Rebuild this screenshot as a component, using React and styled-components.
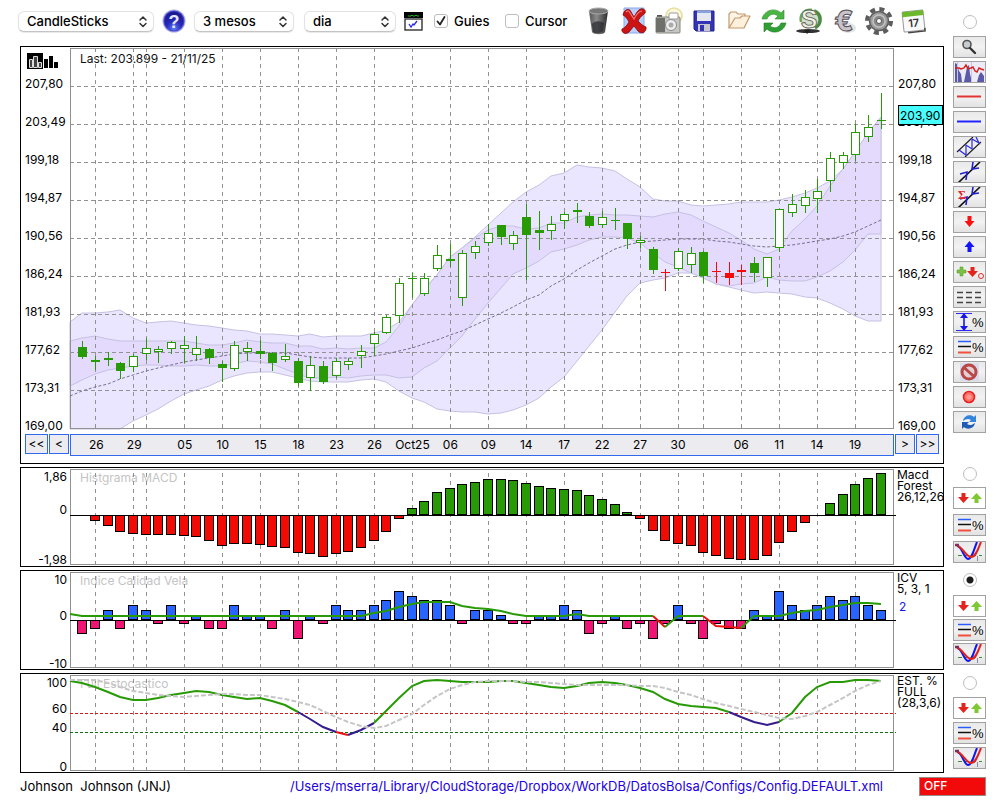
import React from "react";
import styled, { createGlobalStyle } from "styled-components";

const GlobalStyle = createGlobalStyle`
  * { box-sizing: border-box; }
  body {
    margin: 0;
    background: #fff;
    color: #000;
    font-family: Inter, "Liberation Sans", sans-serif;
    font-size: 12px;
    line-height: 14px;
  }
`;

/* ---------- layout ---------- */

const Page = styled.main`
  display: grid;
  grid-template-columns: minmax(0, 1fr) 33px;
  column-gap: 9px;
  row-gap: 3px;
  padding: 0 14px 0 20px;
`;

const Toolbar = styled.header`
  display: flex;
  align-items: center;
  gap: 10px;
  height: 46px;
  padding-bottom: 4px;
  margin-left: -2px;
`;

const Group = styled.div`
  display: flex;
  align-items: center;
  gap: 8px;
`;

const Checks = styled.div`
  display: flex;
  align-items: center;
`;

const SelectBox = styled.span`
  position: relative;
  display: block;
  width: ${(p) => p.$width}px;
  height: 21px;
  svg { position: absolute; right: 6px; top: 4px; pointer-events: none; }
`;

const Select = styled.select`
  appearance: none;
  width: 100%;
  height: 21px;
  padding: 0 8px;
  border: 1px solid #e2e2e2;
  border-bottom-color: #c4c4c4;
  border-radius: 6px;
  background: #fff;
  box-shadow: 0 1px 1px #00000018;
  color: #000;
  font: 500 13px/18px Inter, "Liberation Sans", sans-serif;
`;

const CheckLabel = styled.label`
  display: flex;
  align-items: center;
  gap: 6px;
  width: ${(p) => p.$width}px;
  font-size: 13px;
  font-weight: 500;
`;

const CheckInput = styled.input`
  appearance: none;
  flex: none;
  width: 14px;
  height: 14px;
  margin: 0;
  border: 1px solid #bdbdbd;
  border-radius: 3px;
  background: #fff;
  &:checked {
    background: url("data:image/svg+xml,%3Csvg xmlns='http://www.w3.org/2000/svg' viewBox='0 0 12 12'%3E%3Cpath d='M2.5 6.5 5 9.5 9.5 2' fill='none' stroke='%23222' stroke-width='1.8' stroke-linecap='round' stroke-linejoin='round'/%3E%3C/svg%3E") center / 12px 12px no-repeat;
  }
`;

const PlainButton = styled.button`
  display: grid;
  place-items: center;
  flex: none;
  width: ${(p) => p.$width}px;
  height: 28px;
  padding: 0;
  border: 0;
  background: none;
  svg { overflow: visible; }
`;

const Tools = styled.div`
  display: flex;
  align-items: center;
`;

const Panel = styled.section`
  display: grid;
  grid-template-columns: 49px minmax(0, 1fr) 49px;
  grid-template-rows: ${(p) => p.$plot}px;
  align-content: start;
  border: 1px solid #000;
  padding: 1px 0;
  height: ${(p) => p.$height}px;
  overflow: hidden;
`;

const Plot = styled.div`
  position: relative;
`;

const PlotTitle = styled.h2`
  position: absolute;
  left: 10px;
  top: ${(p) => p.$top}px;
  margin: 0;
  font-size: 12px;
  font-weight: 400;
  line-height: 14px;
  color: ${(p) => p.$color};
  white-space: nowrap;
`;

const Drawing = styled.svg`
  position: relative;
  display: block;
  width: 100%;
  height: ${(p) => p.$height}px;
  overflow: visible;
`;

const PriceAxis = styled.div`
  display: flex;
  flex-direction: column;
  gap: 24px;
  padding: ${(p) => p.$top}px 0 0 4px;
  white-space: nowrap;
`;

const AxisHead = styled.div`
  display: flex;
  flex-direction: column;
  padding-left: 6px;
  padding-top: 5px;
`;

const RightAxis = styled.div`
  position: relative;
`;

const LastPrice = styled.output`
  position: absolute;
  top: 57px;
  left: 4px;
  right: 0;
  height: 20px;
  border: 1px solid #000;
  background: #48ffff;
  padding-left: 1px;
  line-height: 20px;
  white-space: nowrap;
`;

const Nav = styled.div`
  grid-column: 1 / -1;
  display: grid;
  grid-template-columns: 49px minmax(0, 1fr) 49px;
  height: 20px;
  margin-top: 5px;
`;

const NavSide = styled.div`
  display: flex;
  gap: 1px;
  padding: 0 1px;
  justify-content: ${(p) => p.$justify};
`;

const NavButton = styled.button`
  width: ${(p) => p.$width}px;
  height: 20px;
  padding: 0;
  border: 1px solid #3068ee;
  background: #ebebf0;
  color: #000;
  font: 12px/18px Inter, "Liberation Sans", sans-serif;
`;

const Dates = styled.div`
  display: grid;
  grid-template-columns: repeat(65, minmax(0, 1fr));
  border: 1px solid #3068ee;
  background: #ebebf0;
  line-height: 20px;
`;

const DateLabel = styled.span`
  grid-row: 1;
  grid-column: ${(p) => p.$at} / span 2;
  justify-self: center;
`;

const ValueAxis = styled.div`
  display: grid;
  grid-template-rows: ${(p) => p.$rows};
  padding: 2px 3px 0 0;
  justify-items: end;
  line-height: 12px;
`;

const Notes = styled.div`
  display: flex;
  flex-direction: column;
  padding-left: 3px;
  line-height: 11px;
  white-space: nowrap;
`;

const NoteValue = styled.span`
  color: #1414ee;
  padding: 7px 2px;
`;

const Rail = styled.aside`
  display: flex;
  flex-direction: column;
  align-items: center;
  gap: ${(p) => p.$gap}px;
  padding-top: ${(p) => p.$top}px;
`;

const Radio = styled.input`
  appearance: none;
  flex: none;
  width: 14px;
  height: 14px;
  margin: 0 0 ${(p) => p.$below}px;
  border: 1px solid #bdbdbd;
  border-radius: 50%;
  background: #fff;
  &:checked { background: radial-gradient(circle, #1c1c1c 3px, #fff 4px); }
`;

const RailButton = styled.button`
  flex: none;
  width: 33px;
  height: 22px;
  padding: 0;
  border: 1px solid #a2a2a2;
  background: ${(p) => (p.$white ? "#fff" : "linear-gradient(#e9e9e9, #f2f2f2 50%, #e2e2e2)")};
  svg { display: block; }
`;

const Footer = styled.footer`
  display: flex;
  align-items: center;
  grid-column: 1 / -1;
  height: 20px;
  font-size: 13px;
  white-space: pre;
`;

const ConfigLink = styled.a`
  margin-left: auto;
  color: #2200e6;
  text-decoration: none;
`;

const OffButton = styled.button`
  width: 67px;
  height: 19px;
  margin-left: 36px;
  padding: 0 4px;
  border: 1px solid #9a8a8a;
  background: #f20a0a;
  color: #fff;
  text-align: left;
  font: 500 12px/16px Inter, "Liberation Sans", sans-serif;
`;

/* ---------- data ---------- */

const W = 824;
const px = (i) => Math.floor(12.672 * (i + 1) + 0.155);

const DATES = [
  [1, "26"], [4, "29"], [5, ""], [8, "05"], [11, "10"], [14, "15"], [17, "18"], [20, "23"],
  [23, "26"], [26, "Oct25"], [29, "06"], [32, "09"], [35, "14"], [38, "17"], [41, "22"],
  [44, "27"], [47, "30"], [49, ""], [52, "06"], [55, "11"], [58, "14"], [61, "19"],
];

const DATE_TEXT = DATES.filter(([, t]) => t);

const PRICES = ["207,80", "203,49", "199,18", "194,87", "190,56", "186,24", "181,93", "177,62", "173,31", "169,00"];

/* kind (F filled, H hollow, R red), high, body top, body bottom, low */
const CANDLES = [
  ["F", 293, 299, 309, 311], ["F", 308, 312, 314, 322], ["F", 304, 310, 312, 318], ["F", 314, 315, 323, 331],
  ["H", 306, 308, 319, 324], ["H", 290, 300, 306, 312], ["H", 298, 301, 304, 315], ["H", 293, 294, 301, 306],
  ["H", 288, 297, 301, 315], ["H", 288, 300, 307, 313], ["F", 300, 301, 310, 316], ["F", 313, 316, 320, 334],
  ["H", 293, 297, 321, 323], ["H", 294, 300, 304, 313], ["F", 292, 303, 306, 311], ["F", 304, 305, 315, 323],
  ["H", 296, 308, 312, 314], ["F", 310, 313, 335, 338], ["H", 308, 317, 330, 343], ["F", 313, 318, 334, 336],
  ["H", 310, 313, 328, 330], ["H", 310, 313, 317, 322], ["H", 297, 303, 308, 320], ["H", 284, 286, 296, 308],
  ["H", 267, 269, 285, 286], ["H", 230, 235, 268, 275], ["F", 225, 230, 231, 250], ["H", 225, 230, 246, 248],
  ["H", 197, 207, 221, 223], ["F", 196, 211, 213, 219], ["H", 202, 205, 250, 258], ["H", 193, 198, 205, 211],
  ["H", 176, 185, 195, 198], ["F", 177, 177, 189, 197], ["H", 183, 187, 196, 202], ["F", 156, 169, 187, 232],
  ["F", 163, 182, 185, 202], ["H", 168, 176, 183, 192], ["H", 164, 166, 173, 181], ["F", 155, 162, 164, 175],
  ["F", 164, 168, 178, 180], ["H", 163, 169, 177, 180], ["F", 160, 172, 173, 182], ["F", 175, 175, 191, 201],
  ["H", 188, 192, 195, 200], ["F", 199, 201, 222, 226], ["R", 221, 224, 225, 243], ["H", 200, 203, 221, 223],
  ["H", 199, 205, 217, 225], ["F", 203, 204, 228, 235], ["R", 214, 223, 224, 235], ["R", 214, 225, 230, 237],
  ["R", 217, 222, 224, 237], ["F", 209, 215, 225, 234], ["H", 209, 209, 230, 239], ["H", 161, 161, 200, 204],
  ["H", 146, 156, 165, 169], ["H", 142, 149, 158, 165], ["H", 131, 143, 151, 165], ["H", 104, 110, 133, 144],
  ["H", 104, 107, 115, 121], ["H", 76, 84, 107, 113], ["H", 67, 79, 89, 94], ["F", 45, 72, 73, 81],
];

/* band and line series start one step before the first candle */
const OUTER_TOP = [274, 265, 265, 264, 262, 270, 275, 274, 273, 275, 277, 278, 280, 282, 283, 286, 286, 287, 288, 286, 289, 288, 288, 288, 285, 282, 274, 257, 241, 227, 209, 200, 189, 177, 165, 154, 144, 137, 128, 125, 117, 119, 120, 123, 131, 139, 151, 153, 153, 157, 158, 157, 156, 154, 154, 154, 152, 149, 145, 140, 133, 121, 104, 85, 69];
const INNER_TOP = [293, 290, 288, 291, 293, 293, 293, 293, 293, 293, 295, 297, 297, 295, 292, 294, 295, 295, 298, 298, 301, 300, 301, 300, 300, 294, 278, 257, 242, 227, 209, 200, 190, 182, 178, 178, 181, 180, 175, 175, 169, 167, 166, 167, 167, 168, 169, 166, 164, 167, 173, 179, 185, 192, 201, 206, 201, 183, 171, 158, 138, 121, 104, 85, 69];
const INNER_LOW = [338, 332, 326, 322, 320, 318, 317, 317, 318, 318, 317, 318, 318, 316, 313, 314, 316, 321, 326, 330, 330, 329, 330, 328, 327, 327, 330, 329, 320, 313, 300, 288, 271, 255, 240, 226, 220, 213, 204, 201, 197, 192, 189, 189, 190, 195, 205, 214, 219, 225, 230, 236, 238, 236, 235, 229, 232, 233, 233, 229, 223, 214, 202, 186, 186];
const OUTER_LOW = [381, 381, 381, 381, 381, 373, 367, 361, 353, 346, 342, 338, 332, 328, 325, 324, 324, 327, 330, 333, 334, 334, 334, 332, 331, 334, 343, 350, 354, 361, 363, 364, 364, 366, 365, 362, 357, 350, 339, 329, 313, 298, 282, 264, 248, 235, 232, 230, 225, 225, 229, 236, 239, 242, 245, 244, 245, 246, 249, 250, 255, 261, 268, 273, 273];
const MIDDLE = [348, 343, 339, 336, 331, 327, 323, 320, 317, 314, 312, 310, 308, 306, 305, 305, 305, 305, 307, 309, 310, 310, 310, 310, 308, 306, 303, 300, 296, 292, 287, 283, 277, 271, 265, 259, 252, 247, 238, 231, 222, 215, 208, 201, 197, 194, 193, 192, 191, 191, 191, 193, 194, 196, 198, 199, 198, 197, 195, 193, 191, 188, 184, 178, 172];

const MACD = [0, -6, -11, -17, -19, -20, -20, -20, -21, -22, -26, -31, -29, -29, -30, -32, -33, -38, -39, -42, -39, -37, -33, -26, -17, -4, 7, 14, 23, 27, 31, 33, 36, 36, 35, 32, 29, 27, 26, 25, 20, 16, 11, 3, -4, -16, -26, -29, -31, -38, -41, -44, -45, -45, -41, -28, -17, -8, 0, 12, 21, 31, 37, 42];
const ICV = [-3, -2, 2, -2, 3, 2, -1, 3, -1, 1, -2, -2, 3, 1, 1, -2, 2, -4, 1, -1, 3, 2, 2, 3, 4, 6, 5, 4, 4, 3, -1, 2, 2, 1, -1, -1, 1, 1, 3, 2, -3, -1, 1, -2, -1, -4, -1, 3, -1, -4, -1, -2, -2, 2, 1, 6, 3, 2, 3, 5, 4, 5, 3, 2];
const ICV_LINE = [42, 44, 44, 44, 44, 44, 44, 44, 44, 44, 44, 44, 44, 44, 44, 44, 44, 44, 44, 44, 44, 44, 44, 44, 41, 39, 35, 32, 30, 30, 30, 34, 36, 37, 39, 42, 44, 44, 44, 44, 42, 44, 44, 44, 44, 44, 44, 55, 44, 44, 44, 54, 55, 56, 44, 44, 44, 41, 39, 38, 35, 33, 31, 31, 32];
const STOCH = [6, 8, 12, 17, 22, 25, 25, 23, 20, 18, 16, 17, 20, 22, 24, 23, 26, 30, 37, 44, 52, 57, 60, 55, 48, 36, 23, 11, 6, 5, 6, 7, 7, 7, 6, 6, 8, 10, 12, 13, 11, 8, 7, 8, 10, 13, 17, 24, 29, 31, 32, 33, 37, 42, 47, 50, 47, 38, 22, 12, 7, 7, 5, 5, 6];
const STOCH_SLOW = [5, 5, 5, 8, 12, 16, 18, 20, 21, 22, 21, 20, 19, 19, 20, 20, 22, 24, 27, 30, 36, 42, 47, 51, 53, 51, 45, 39, 30, 21, 14, 10, 7, 6, 6, 6, 7, 7, 8, 9, 10, 10, 10, 10, 10, 11, 11, 13, 17, 20, 24, 28, 31, 34, 37, 40, 43, 44, 41, 37, 30, 23, 16, 10, 6];

const GREEN = "#289a05";
const points = (list) => list.map((y, k) => `${px(k - 1)},${y}`).join(" ");
const slice = (list, from, to) =>
  list.slice(from + 1, to + 2).map((y, k) => `${px(from + k)},${y}`).join(" ");
const band = (top, low) =>
  points(top) + " " + low.map((y, k) => `${px(k - 1)},${y}`).reverse().join(" ");

/* ---------- chart parts ---------- */

function Grid({ height, rows = [], from = 0 }) {
  return (
    <g fill="none" stroke="#919191" shapeRendering="crispEdges">
      <rect x="0.5" y="0.5" width={W - 1} height={height - 1} />
      {rows.map((y) => (
        <line key={y} x1="0" x2={W + 2} y1={y + 0.5} y2={y + 0.5} strokeDasharray="4 3" />
      ))}
      {DATES.map(([i]) => (
        <line key={i} x1={px(i) + 0.5} x2={px(i) + 0.5} y1={from} y2={height + 1} strokeDasharray="4 4" />
      ))}
    </g>
  );
}

function Chart({ height, children }) {
  return (
    <Drawing $height={height} viewBox={`0 0 ${W} ${height}`} preserveAspectRatio="none" aria-hidden="true">
      {children}
    </Drawing>
  );
}

function Candle({ index, data: [kind, high, top, bottom, low] }) {
  const x = px(index);
  const color = kind === "R" ? "#f50a0a" : GREEN;
  return (
    <g shapeRendering="crispEdges">
      <rect x={x} y={high} width="1" height={low - high} fill={color} />
      <rect x={x - 4} y={top} width="9" height={bottom - top} fill={color} />
      {kind === "H" && <rect x={x - 3} y={top + 1} width="7" height={bottom - top - 2} fill="#fff" />}
    </g>
  );
}

function Bars({ sizes, zero, up, down }) {
  return (
    <g shapeRendering="crispEdges" stroke="#000">
      {sizes.map((v, i) => {
        if (!v) return null;
        const h = Math.abs(v);
        return (
          <rect
            key={i}
            x={px(i) - 4.5}
            y={v > 0 ? zero - h + 0.5 : zero + 0.5}
            width="9"
            height={h - 1}
            fill={v > 0 ? up : down}
          />
        );
      })}
      <line x1="0" x2={W + 2} y1={zero + 0.5} y2={zero + 0.5} />
    </g>
  );
}

function Line({ list, from, to, color }) {
  return <polyline points={slice(list, from, to)} fill="none" stroke={color} strokeWidth="2" />;
}

/* ---------- rail icons ---------- */

const RailIcon = ({ children }) => (
  <svg width="31" height="20" viewBox="1 1 31 20" aria-hidden="true">{children}</svg>
);

const Percent = ({ x, y }) => (
  <text x={x} y={y} fontSize="13" fontWeight="500" fontFamily="Liberation Sans, sans-serif">%</text>
);

const TrendArrows = () => (
  <g fill="none">
    <path d="M5 22 27 1" stroke="#111" strokeWidth="1.6" />
    <path d="m7 13 7-2-1 8M20 1l-1 7 7-1" stroke="#2020d0" strokeWidth="1.6" />
  </g>
);

const Level = () => (
  <>
    <path d="M5 5.500h13" stroke="#2a5cff" strokeWidth="1.500" />
    <path d="M5 10.500h13" stroke="#111" strokeWidth="1.500" />
    <path d="M5 16.500h13" stroke="#f0503c" strokeWidth="2" />
    <Percent x={19} y={16} />
  </>
);

const Curves = () => (
  <g fill="none">
    <path d="M5 14.500h24" stroke="#3d8b3d" strokeDasharray="4 3" />
    <path d="M24.500 15v5" stroke="#8888a8" />
    <path d="M4 5C9 5 11 18 15 18S21 8 24 1" stroke="#1414ee" strokeWidth="2" />
    <path d="M3 4C9 5 13 16 18 16S25 8 28 1" stroke="#e0241c" strokeWidth="2" />
    <path d="M2 4h4" stroke="#803060" strokeWidth="2.500" />
  </g>
);

const UpDown = () => (
  <>
    <path d="M8.500 6h4v4h3.500l-5.500 6L5 10h3.500z" fill="#e3241c" />
    <path d="M21.500 16h4v-4H29l-5.500-6L18 12h3.500z" fill="#7ec832" />
  </>
);

const RAIL = [
  ["Zoom", <><circle cx="14" cy="8.500" r="4" fill="#c8ccd0" stroke="#555" strokeWidth="1.600" /><path d="m17 12 5 5" stroke="#333" strokeWidth="2.400" strokeLinecap="round" /></>],
  ["Volume", <><rect x="1" y="0" width="31" height="22" fill="#eceaf6" /><path d="M2 21V2l2 1 2 7 2 3 1 8zM11 21l3-15 2-2 1 9 2 8zM24 21l2-7 2-3 3 4v6z" fill="#5a5aa8" /><path d="M4.500 1v20M18.500 1v20" stroke="#c8c4e4" /><path d="M2 7h4l2 1 3-1 2-3 2 4 3-1 2-1 2 4 2 1 2-4 2 1 3 1" fill="none" stroke="#d8201c" strokeWidth="1.400" /></>],
  ["Red line", <path d="M4 10.500h24" stroke="#e23434" strokeWidth="2" />],
  ["Blue line", <path d="M4 10.500h24" stroke="#2424ff" strokeWidth="2" />],
  ["Channel", <g fill="none"><path d="M4 16 20 1M12 21 28 6" stroke="#222" strokeWidth="1.200" /><path d="m6 14 7 5V9l6 4V3l7 4-3-6" stroke="#2a2ae0" strokeWidth="1.200" /></g>],
  ["Trend", <TrendArrows />],
  ["Trend sum", <><TrendArrows /><text x="5" y="13" fontSize="12" fontWeight="700" fill="#e02828" fontFamily="Liberation Serif, serif">Σ</text></>],
  ["Sell mark", <path d="M14.500 5h4v5h3l-5 6-5-6h3z" fill="#fa1010" />],
  ["Buy mark", <path d="M14.500 16h4v-5h3l-5-6-5 6h3z" fill="#1414fa" />],
  ["Signals", <><path d="M7 6h3v3h3v3h-3v3H7v-3H4V9h3z" fill="#7ac143" stroke="#5ba32c" strokeWidth=".6" /><path d="M17.500 6h4v4H25l-5.500 6L14 10h3.500z" fill="#e3241c" /><circle cx="28" cy="15" r="2.500" fill="none" stroke="#e03030" /></>],
  ["Dashes", <path d="M4 6.500h6m3 0h6m3 0h6M4 11.500h6m3 0h6m3 0h6M4 16.500h6m3 0h6m3 0h6" stroke="#444" strokeWidth="1.600" />],
  ["Range", <><path d="M3 2.500h16M3 19.500h16" stroke="#2a2aff" /><path d="M11 6v10" stroke="#1818e6" strokeWidth="1.600" /><path d="m11 2 4 5H7zM11 20l4-5H7z" fill="#1818e6" /><Percent x={19} y={16} /></>],
  ["Levels", <Level />],
  ["Disable", <g fill="none"><rect x="7" y="2" width="19" height="18" fill="#d8dcec" /><circle cx="16" cy="11" r="7" fill="#e4d0d4" stroke="#b84848" strokeWidth="3" /><path d="m11 6.500 10 9" stroke="#b84848" strokeWidth="3" /></g>],
  ["Record", <><circle cx="16" cy="11" r="5.500" fill="#ff7068" stroke="#e82020" strokeWidth="1.600" /><circle cx="16" cy="11" r="2.500" fill="#ff9a90" /></>],
  ["Reload", <><path d="M10 10c1-6 8-7 11-4l2-2v7h-7l2-2c-3-2-5-1-8 1z" fill="#3484dc" /><path d="M22 12c-1 6-8 7-11 4l-2 2v-7h7l-2 2c3 2 5 1 8-1z" fill="#1f5cb4" /></>],
];

const SMALL_RAIL = [["Marks", <UpDown />, true], ["Levels", <Level />], ["Averages", <Curves />]];

/* ---------- toolbar icons ---------- */

const HelpIcon = () => (
  <svg width="24" height="24" viewBox="0 0 24 24" aria-hidden="true">
    <defs>
      <radialGradient id="help" cx="50%" cy="90%" r="80%"><stop offset="0" stopColor="#5a7cf8" /><stop offset=".5" stopColor="#2828b8" /><stop offset="1" stopColor="#1a1a90" /></radialGradient>
    </defs>
    <circle cx="12" cy="12" r="11.500" fill="#a8a8e4" />
    <circle cx="12" cy="12" r="10.500" fill="#4646cc" />
    <circle cx="12" cy="12" r="9.500" fill="url(#help)" />
    <text x="12" y="18.500" textAnchor="middle" fontSize="18" fontWeight="700" fill="#e4e6ff" fontFamily="Liberation Sans, sans-serif">?</text>
  </svg>
);

const WindowIcon = () => (
  <svg width="20" height="20" viewBox="0 0 20 20" aria-hidden="true">
    <rect x="0" y="1" width="19" height="6" fill="#000" />
    <path d="M4 5h3l1-1 1 1h2l1-1 1 1h2" stroke="#18b818" fill="none" />
    <rect x="1" y="8" width="17" height="11" fill="#fff" stroke="#333" strokeWidth="1.400" />
    <path d="m5 13 2 3 2-3 1 1 3-4" fill="none" stroke="#2828e8" strokeWidth="1.300" />
  </svg>
);

const ICONS = [
  ["Trash", <svg width="22" height="28" viewBox="0 0 22 28"><defs><linearGradient id="bin"><stop offset="0" stopColor="#555" /><stop offset=".4" stopColor="#8a8a8a" /><stop offset="1" stopColor="#2c2c2c" /></linearGradient></defs><path d="M1 4 4 25c1 3 12 3 13 0l3-21z" fill="url(#bin)" /><ellipse cx="10.500" cy="4" rx="9.500" ry="3" fill="#777" stroke="#aaa" /><path d="M4 17c3-4 9-3 12-1l-1 8c-3 3-8 3-10 1z" fill="#26282c" opacity=".7" /></svg>],
  ["Delete", <svg width="26" height="28" viewBox="0 0 26 28"><path d="M3 1h20v25H3z" fill="#b8d0fa" stroke="#88a8e8" /><path d="M3 5c3-4 6-3 7 0l3 5c3-5 5-9 9-8 3 1 3 4 1 5-3 2-5 5-6 7 3 3 5 5 8 6 1 5-5 8-8 4l-4-5-5 6c-3 3-8 1-7-3 3-1 5-4 7-7-2-4-4-6-6-7z" fill="#cc1414" stroke="#8a0808" strokeWidth=".8" /><path d="M5 5c2-2 3-1 4 1l4 6c2-4 5-8 8-8" fill="none" stroke="#f07878" strokeWidth="1.200" /></svg>],
  ["Snapshot", <svg width="28" height="28" viewBox="0 0 28 28"><circle cx="19" cy="9" r="8" fill="#fbf8dc" stroke="#e6de9c" strokeWidth="1.500" /><path d="M2 8h5v3H2z" fill="#555" /><rect x="1" y="10" width="24" height="16" rx="1" fill="#c6c6c2" stroke="#85857f" /><rect x="1" y="11" width="9" height="14" fill="#6e6e6a" /><circle cx="16" cy="18" r="5.500" fill="#eee" stroke="#888" /><circle cx="16" cy="18" r="2.500" fill="#aaa" /><rect x="14" y="6" width="9" height="6" rx="1" fill="#fff" stroke="#999" /></svg>],
  ["Save", <svg width="22" height="22" viewBox="0 0 22 22"><path d="M1 1h20v20H3l-2-2z" fill="#3434b4" stroke="#20208a" /><rect x="4" y="1" width="14" height="10" fill="#e4e8f4" /><rect x="4" y="1" width="14" height="2" fill="#88a4dc" /><rect x="5" y="14" width="12" height="7" fill="#c8c8cc" /><rect x="7" y="15" width="4" height="6" fill="#3434b4" /></svg>],
  ["Open", <svg width="24" height="20" viewBox="0 0 24 20"><path d="M2 17V3l2-2h5l2 2h7v4" fill="#fdf4e6" stroke="#c4986a" strokeWidth="1.200" /><path d="m2 17 6-10h5l2-2h8l-6 12z" fill="#fdf0dc" stroke="#c4986a" strokeWidth="1.200" strokeLinejoin="round" /></svg>],
  ["Refresh", <svg width="26" height="26" viewBox="0 0 26 26"><path d="M1 11C3 2 14-1 20 5l3-3v9H14l3-3C13 5 8 6 6 11z" fill="#4cb444" stroke="#279028" strokeWidth=".6" /><path d="M25 15c-2 9-13 12-19 6l-3 3v-9h9l-3 3c4 3 9 2 11-3z" fill="#2f9e34" stroke="#208224" strokeWidth=".6" /></svg>],
  ["Dollar", <svg width="26" height="28" viewBox="0 0 26 28"><ellipse cx="12" cy="24" rx="12" ry="2" fill="#333" /><circle cx="14" cy="12" r="9" fill="#d4dccc" /><path d="M18 4c8 3 8 13 1 17" fill="none" stroke="#4c8c40" strokeWidth="3.500" /><path d="M5 15C3 7 9 2 16 3" fill="none" stroke="#6ca45c" strokeWidth="2.500" /><text x="13" y="21" textAnchor="middle" fontSize="25" fontWeight="700" fill="#f0f0e8" stroke="#55604c" strokeWidth=".8" fontFamily="Liberation Sans, sans-serif">S</text><path d="m8 23 3 4 4-4z" fill="#222" /></svg>],
  ["Euro", <svg width="26" height="28" viewBox="0 0 26 28"><ellipse cx="17" cy="21" rx="8" ry="5" fill="#e4e4e4" /><text x="13" y="24" textAnchor="middle" fontSize="28" fontWeight="800" fill="#c8c4ca" stroke="#55505a" strokeWidth="1" fontFamily="Inter, sans-serif">€</text></svg>],
  ["Settings", <svg width="28" height="28" viewBox="0 0 28 28"><circle cx="14" cy="14" r="12" fill="none" stroke="#5c5c5c" strokeWidth="4" strokeDasharray="5 4.425" /><circle cx="14" cy="14" r="9.500" fill="#9c9c9c" stroke="#5c5c5c" strokeWidth="1.500" /><circle cx="14" cy="14" r="6" fill="#888" stroke="#c4c4c4" strokeWidth="1.500" /><circle cx="14" cy="14" r="2.500" fill="#fff" stroke="#555" /></svg>],
  ["Calendar", <svg width="26" height="26" viewBox="0 0 26 26"><g transform="rotate(-6 13 13)"><rect x="2" y="3" width="21" height="20" rx="1" fill="#fafafa" stroke="#999" /><rect x="2" y="3" width="21" height="5" fill="#6cb82c" /><path d="M6 24h17v-3" fill="none" stroke="#444" strokeWidth="1.500" /><text x="12.500" y="19" textAnchor="middle" fontSize="11" fontWeight="600" fill="#333" fontFamily="Inter, sans-serif">17</text></g></svg>],
];

function DropDown({ label, width, value }) {
  return (
    <SelectBox $width={width}>
      <Select aria-label={label} defaultValue={value}><option>{value}</option></Select>
      <svg width="10" height="13" viewBox="0 0 10 13" aria-hidden="true">
        <path d="M2 5 5 2l3 3M2 8.500l3 3 3-3" fill="none" stroke="#333" strokeWidth="1.500" strokeLinecap="round" strokeLinejoin="round" />
      </svg>
    </SelectBox>
  );
}

function SideRail({ top, gap, below, items, label, checked }) {
  return (
    <Rail $top={top} $gap={gap}>
      <Radio type="radio" name="panel" aria-label={label} defaultChecked={checked} $below={below} />
      {items.map(([name, icon, white]) => (
        <RailButton key={name} type="button" aria-label={name} $white={white}>
          <RailIcon>{icon}</RailIcon>
        </RailButton>
      ))}
    </Rail>
  );
}

export default function App() {
  return (
    <>
      <GlobalStyle />
      <Page>
        <div>
          <Toolbar>
            <Group>
              <DropDown label="Chart" width={136} value="CandleSticks" />
              <PlainButton type="button" aria-label="Help" $width={24}><HelpIcon /></PlainButton>
              <DropDown label="Period" width={100} value="3 mesos" />
            </Group>
            <Group>
              <DropDown label="Interval" width={92} value="dia" />
              <PlainButton type="button" aria-label="Window" $width={20}><WindowIcon /></PlainButton>
            </Group>
            <Checks>
              <CheckLabel $width={71}><CheckInput type="checkbox" defaultChecked />Guies</CheckLabel>
              <CheckLabel $width={66}><CheckInput type="checkbox" />Cursor</CheckLabel>
            </Checks>
            <Tools>
              {ICONS.map(([name, icon]) => (
                <PlainButton key={name} type="button" aria-label={name} $width={35}>{icon}</PlainButton>
              ))}
            </Tools>
          </Toolbar>

          <Panel $height={418} $plot={381}>
            <div>
              <AxisHead>
                <svg width="32" height="16" viewBox="0 0 32 16" aria-hidden="true">
                  <path d="M0 0h16v16H0z" />
                  <path d="M2.500 6.500h3v8h-3zM6.500 3.500h4v11h-4zM11.500 9.500h3v5h-3z" fill="#444" stroke="#ddd" />
                  <path d="M17 6h4v9h-4zM22 3h4v12h-4zM27 9h4v6h-4z" />
                </svg>
              </AxisHead>
              <PriceAxis $top={8}>{PRICES.map((p) => <span key={p}>{p}</span>)}</PriceAxis>
            </div>
            <Plot>
              <PlotTitle $color="#111" $top={4}>Last: 203.899 - 21/11/25</PlotTitle>
              <Chart height={381}>
                <polygon points={band(OUTER_TOP, OUTER_LOW)} fill="#ebe6ff" stroke="#c6c1e2" />
                <polygon points={band(INNER_TOP, INNER_LOW)} fill="#e3dafd" stroke="#c6c1e2" />
                <Grid height={381} rows={[38, 76, 114, 152, 190, 228, 266, 304, 342]} />
                <polyline points={points(MIDDLE)} fill="none" stroke="#77708c" strokeDasharray="3 2" />
                {CANDLES.map((c, i) => <Candle key={i} index={i} data={c} />)}
              </Chart>
            </Plot>
            <RightAxis>
              <PriceAxis $top={29}>{PRICES.map((p) => <span key={p}>{p}</span>)}</PriceAxis>
              <LastPrice>203,90</LastPrice>
            </RightAxis>
            <Nav>
              <NavSide $justify="flex-end">
                <NavButton type="button" $width={23}>&lt;&lt;</NavButton>
                <NavButton type="button" $width={20}>&lt;</NavButton>
              </NavSide>
              <Dates>
                {DATE_TEXT.map(([i, t]) => <DateLabel key={i} $at={i + 1}>{t}</DateLabel>)}
              </Dates>
              <NavSide $justify="flex-start">
                <NavButton type="button" $width={20}>&gt;</NavButton>
                <NavButton type="button" $width={23}>&gt;&gt;</NavButton>
              </NavSide>
            </Nav>
          </Panel>
        </div>
        <SideRail top={15} gap={3} below={4} items={RAIL} label="Price panel" />

        <Panel $height={100} $plot={96}>
          <ValueAxis $rows="33px 50px 12px"><span>1,86</span><span>0</span><span>-1,98</span></ValueAxis>
          <Plot>
            <PlotTitle $color="#c4c4c4" $top={2}>Histgrama MACD</PlotTitle>
            <Chart height={96}>
              <Grid height={96} from={4} />
              <Bars sizes={MACD} zero={46} up={GREEN} down="#f20a05" />
            </Chart>
          </Plot>
          <Notes><span>Macd</span><span>Forest</span><span>26,12,26</span></Notes>
        </Panel>
        <SideRail top={0} gap={5} below={1} items={SMALL_RAIL} label="MACD panel" />

        <Panel $height={100} $plot={96}>
          <ValueAxis $rows="36px 48px 12px"><span>10</span><span>0</span><span>-10</span></ValueAxis>
          <Plot>
            <PlotTitle $color="#c4c4c4" $top={2}>Indice Calidad Vela</PlotTitle>
            <Chart height={96}>
              <Grid height={96} from={4} />
              <Bars
                sizes={ICV.map((v) => (v > 0 ? Math.ceil(v * 4.8) : -Math.floor(-v * 4.8)))}
                zero={48}
                up="#2864ff"
                down="#f01474"
              />
              <Line list={ICV_LINE} from={-1} to={45} color={GREEN} />
              <Line list={ICV_LINE} from={45} to={46} color="#f01010" />
              <Line list={ICV_LINE} from={46} to={49} color={GREEN} />
              <Line list={ICV_LINE} from={49} to={52} color="#f01010" />
              <Line list={ICV_LINE} from={52} to={63} color={GREEN} />
            </Chart>
          </Plot>
          <Notes><span>ICV</span><span>5, 3, 1</span><NoteValue>2</NoteValue></Notes>
        </Panel>
        <SideRail top={3} gap={2} below={6} items={SMALL_RAIL} label="ICV panel" checked />

        <Panel $height={100} $plot={96}>
          <ValueAxis $rows="26px 19px 39px 12px"><span>100</span><span>60</span><span>40</span><span>0</span></ValueAxis>
          <Plot>
            <PlotTitle $color="#c4c4c4" $top={2}>Full Estocastico</PlotTitle>
            <Chart height={96}>
              <Grid height={96} from={4} />
              <line x1="0" x2={W + 2} y1="38.500" y2="38.500" stroke="#d81818" strokeDasharray="3 2" shapeRendering="crispEdges" />
              <line x1="0" x2={W + 2} y1="57.500" y2="57.500" stroke="#107010" strokeDasharray="3 2" shapeRendering="crispEdges" />
              <Line list={STOCH} from={-1} to={17} color={GREEN} />
              <Line list={STOCH} from={17} to={20} color="#351c8c" />
              <Line list={STOCH} from={20} to={21} color="#f01010" />
              <Line list={STOCH} from={21} to={23} color="#351c8c" />
              <Line list={STOCH} from={23} to={51} color={GREEN} />
              <Line list={STOCH} from={51} to={55} color="#351c8c" />
              <Line list={STOCH} from={55} to={63} color={GREEN} />
              <polyline points={points(STOCH_SLOW)} fill="none" stroke="#c6c6c6" strokeWidth="2" strokeDasharray="5 2" />
            </Chart>
          </Plot>
          <Notes><span>EST. %</span><span>FULL</span><span>(28,3,6)</span></Notes>
        </Panel>
        <SideRail top={3} gap={3} below={4} items={SMALL_RAIL} label="Stochastic panel" />

        <Footer>
          <span>Johnson  Johnson (JNJ)</span>
          <ConfigLink href="#config">/Users/mserra/Library/CloudStorage/Dropbox/WorkDB/DatosBolsa/Configs/Config.DEFAULT.xml</ConfigLink>
          <OffButton type="button">OFF</OffButton>
        </Footer>
      </Page>
    </>
  );
}
